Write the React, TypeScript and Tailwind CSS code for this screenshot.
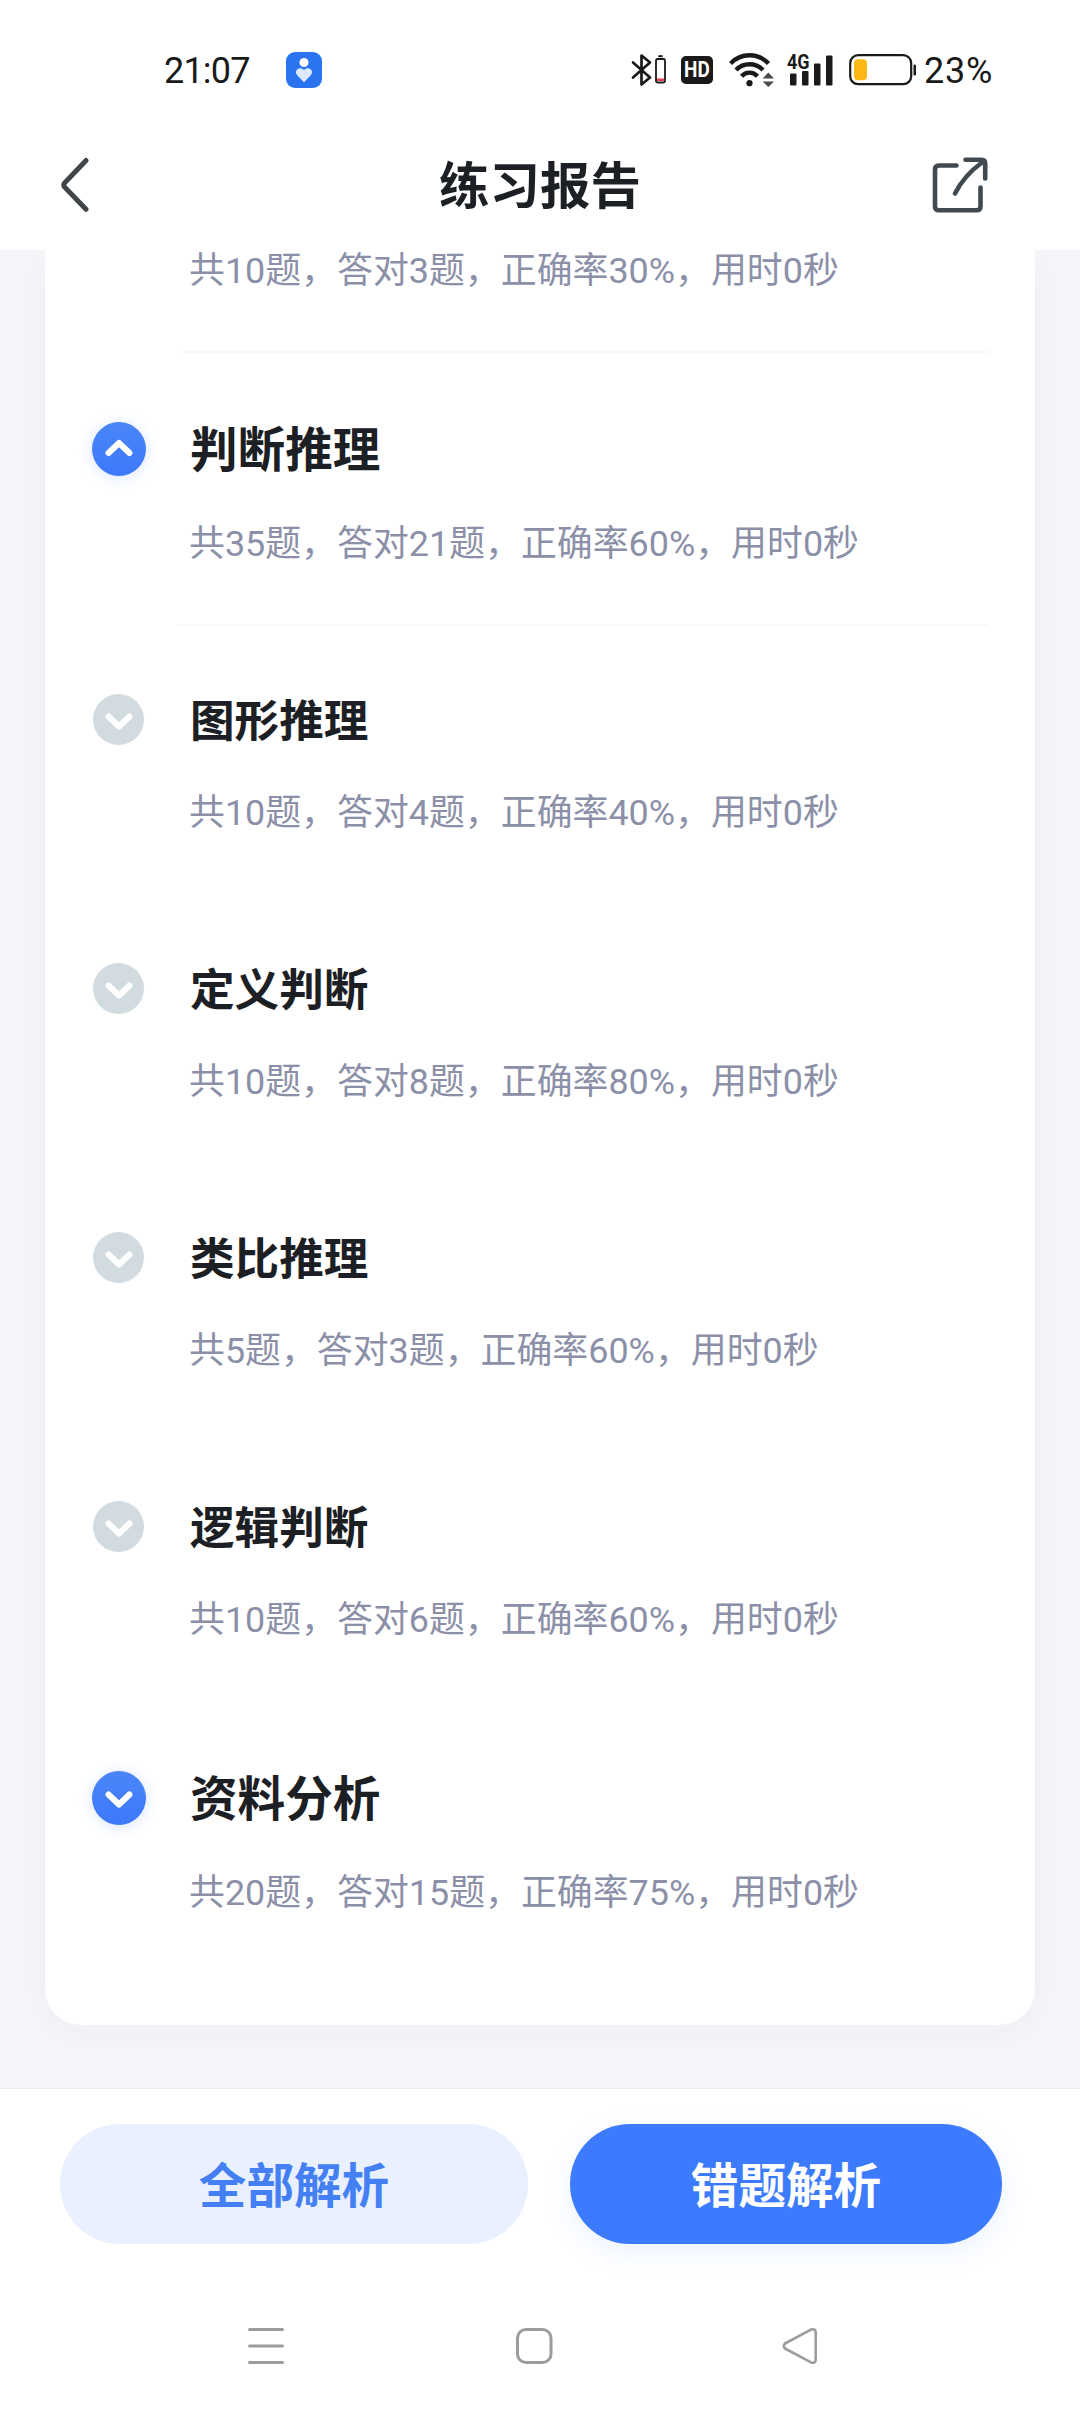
import { clsx } from 'clsx';

interface ReportItem {
  name: string;
  total: number;
  right: number;
  rate: number;
  level: 'group' | 'child';
  expanded?: boolean;
  divider?: boolean;
}

const items: ReportItem[] = [
  { name: '判断推理', total: 35, right: 21, rate: 60, level: 'group', expanded: true, divider: true },
  { name: '图形推理', total: 10, right: 4, rate: 40, level: 'child' },
  { name: '定义判断', total: 10, right: 8, rate: 80, level: 'child' },
  { name: '类比推理', total: 5, right: 3, rate: 60, level: 'child' },
  { name: '逻辑判断', total: 10, right: 6, rate: 60, level: 'child' },
  { name: '资料分析', total: 20, right: 15, rate: 75, level: 'group' },
];

function summary(total: number, right: number, rate: number) {
  return `共${total}题，答对${right}题，正确率${rate}%，用时0秒`;
}

function StatusBar() {
  return (
    <div className="flex h-[120px] items-center pt-[20px] pl-[164px] text-[36px] leading-none text-[#1a1a1a]">
      <span className="w-[122px] pt-[2px] tracking-[-0.8px]">21:07</span>
      <svg width="36" height="36" viewBox="0 0 36 36">
        <rect width="36" height="36" rx="9" fill="#2b74f0" />
        <circle cx="18" cy="10.5" r="4.5" fill="#fff" />
        <path d="M18 30.2 L11.2 23.2 C7.6 19 12.8 13.2 18 18 C23.2 13.2 28.4 19 24.8 23.2 Z" fill="#dfe9fd" />
      </svg>
      <div className="ml-[309px] flex items-center">
        {/* bluetooth with headset battery */}
        <svg width="36" height="36" viewBox="0 0 36 36" fill="none">
          <path d="M2 10.5 L19 25.5 L10.5 32.5 V3.5 L19 10.5 L2 25.5" stroke="#1a1a1a" strokeWidth="2.7" strokeLinejoin="round" strokeLinecap="round" />
          <rect x="25" y="7" width="9" height="23.5" rx="1.5" stroke="#1a1a1a" strokeWidth="1.8" />
          <path d="M27.3 4.2 H31.7" stroke="#1a1a1a" strokeWidth="2" />
          <rect x="26" y="26.5" width="7" height="2.5" fill="#e0424e" />
        </svg>
        <span className="ml-[14px] flex h-7 w-8 items-center justify-center rounded-[5px] bg-[#1a1a1a] text-[22px] font-bold text-white">
          <span className="scale-x-[0.86]">HD</span>
        </span>
        <svg className="ml-4" width="46" height="36" viewBox="0 0 46 36" fill="none">
          <path d="M1.5 11.5 C12 0.5 29 0.5 39.5 11.5" stroke="#1a1a1a" strokeWidth="4.4" />
          <path d="M7 18 C14.5 10.3 26.5 10.3 34 18" stroke="#1a1a1a" strokeWidth="4.4" />
          <path d="M12.5 24.2 C17 19.4 24 19.4 28.5 24.2" stroke="#1a1a1a" strokeWidth="4.4" />
          <circle cx="20.5" cy="31.2" r="3.1" fill="#1a1a1a" />
          <path d="M39.3 20.5 L45 26.5 H33.6 Z M39.3 35 L45 29.5 H33.6 Z" fill="#4a4a4a" />
        </svg>
        <div className="relative ml-3 h-[34px] w-[47px]">
          <span className="absolute -top-px left-0 origin-left scale-x-[0.9] text-[20px] leading-none font-bold">4G</span>
          <svg width="47" height="34" viewBox="0 0 47 34" fill="#1a1a1a">
            <rect x="3" y="20.5" width="6.5" height="12" rx="1" />
            <rect x="15" y="18" width="6.5" height="14.5" rx="1" />
            <rect x="27" y="10.5" width="6.5" height="22" rx="1" />
            <rect x="39" y="2.5" width="6.5" height="30" rx="1" />
          </svg>
        </div>
        <svg className="ml-[15px]" width="68" height="32" viewBox="0 0 68 32" fill="none">
          <rect x="1.2" y="1.2" width="61" height="29" rx="8" stroke="#1a1a1a" strokeWidth="2.2" />
          <rect x="5" y="5.3" width="13" height="21" rx="4" fill="#fdb813" />
          <rect x="64.5" y="10.5" width="2.5" height="11" rx="1.2" fill="#1a1a1a" />
        </svg>
        <span className="ml-[7px] pt-[2px] tracking-[0.8px]">23%</span>
      </div>
    </div>
  );
}

function Header() {
  return (
    <header className="flex h-[130px] items-center pl-[60px]">
      <svg width="56" height="56" viewBox="0 0 56 56" fill="none">
        <path d="M26 3.5 L4.5 26 Q3 28 4.5 30 L26 52.3" stroke="#404648" strokeWidth="5" strokeLinecap="round" />
      </svg>
      <h1 className="ml-[323px] w-[493px] pt-[5px] text-[50.5px] leading-none font-bold text-[#1c2024]">练习报告</h1>
      <svg width="57" height="56" viewBox="0 0 57 56" fill="none" stroke="#404a50" strokeWidth="4.6" strokeLinecap="round">
        <path d="M24.5 8.5 H7 Q3 8.5 3 12.5 V49.5 Q3 53.3 7 53.3 H44.5 Q48.5 53.3 48.5 49.5 V30.5" />
        <path d="M33.5 2.7 H49.5 Q53.2 2.7 53.2 6.5 V21.5" />
        <path d="M50 5.5 Q32 18.5 23 36.5" />
      </svg>
    </header>
  );
}

function ToggleIcon({ level, expanded }: { level: ReportItem['level']; expanded?: boolean }) {
  return (
    <span
      className={clsx(
        'mb-px flex items-center justify-center rounded-full',
        level === 'group'
          ? 'size-[54px] bg-linear-to-b from-[#4a86f8] to-[#3d78fb] shadow-[0_2px_14px_rgba(62,123,254,0.2)]'
          : 'size-[51px] bg-[#d2dbe0]'
      )}
    >
      <svg width="30" height="20" viewBox="0 0 30 20" fill="none">
        <path
          d={expanded ? 'M4.5 14 L15 4 L25.5 14' : 'M4.5 6.5 L15 16.5 L25.5 6.5'}
          stroke="#fff"
          strokeWidth="6"
          strokeLinecap="round"
          strokeLinejoin="round"
        />
      </svg>
    </span>
  );
}

function ReportRow({ item }: { item: ReportItem }) {
  const isGroup = item.level === 'group';

  return (
    <div className={clsx('flex', isGroup ? 'h-[271px] pt-[72px]' : 'h-[269px] pt-[70px]')}>
      <div className="flex h-12 w-[147px] items-center justify-center">
        <ToggleIcon level={item.level} expanded={item.expanded} />
      </div>
      <div className="-ml-[3px] pt-[2px]">
        <h2
          className={clsx(
            'pl-px leading-[48px] font-bold text-[#1c2024]',
            isGroup ? 'text-[47.6px]' : 'text-[44.6px]'
          )}
        >
          {item.name}
        </h2>
        <p className={clsx('text-[35.9px] leading-[54px] text-[#8b8fa8]', isGroup ? 'mt-[42px]' : 'mt-10')}>
          {summary(item.total, item.right, item.rate)}
        </p>
      </div>
    </div>
  );
}

export default function App() {
  return (
    <div className="flex h-[2412px] w-[1080px] flex-col overflow-hidden bg-white font-['Roboto','Noto_Sans_CJK_SC',sans-serif]">
      <StatusBar />
      <Header />

      <main className="h-[1838px] overflow-hidden bg-[#f4f6fa] px-[45px]">
        <div className="h-[1775px] rounded-b-[36px] bg-white shadow-[0_6px_36px_rgba(40,50,60,0.04)]">
          <p className="h-[101px] pl-[144px] text-[35.9px] leading-[42px] text-[#8b8fa8]">{summary(10, 3, 30)}</p>
          <div className="mr-[46px] ml-[135px] h-[2px] bg-[#f7f7f8]" />
          {items.map((item) => (
            <div key={item.name}>
              <ReportRow item={item} />
              {item.divider && <div className="mr-[47px] ml-[131px] h-[2px] bg-[#f9f9fa]" />}
            </div>
          ))}
        </div>
      </main>

      <footer className="flex h-[156px] border-t border-[#e9eaed] pt-[35px] pl-[60px]">
        <button className="h-[120px] w-[468px] rounded-full bg-[#e9f0ff] pt-[8px] text-[47.6px] font-bold text-[#447ff4]">全部解析</button>
        <button className="ml-[42px] h-[120px] w-[432px] rounded-full bg-[#3d7bfe] pt-[8px] text-[47.6px] font-bold text-white shadow-[0_8px_28px_rgba(61,123,254,0.1)]">
          错题解析
        </button>
      </footer>

      {/* system navigation */}
      <nav className="flex items-center pt-[82px] pl-[247px] text-[#9c9c9c]">
        <svg width="38" height="40" viewBox="0 0 38 40" stroke="currentColor" strokeWidth="3" strokeLinecap="round">
          <path d="M2.5 3.5 H35.5 M2.5 20 H35.5 M2.5 36.5 H35.5" />
        </svg>
        <svg className="ml-[230px]" width="38" height="40" viewBox="0 0 38 40" fill="none" stroke="currentColor" strokeWidth="3">
          <rect x="2.5" y="3.5" width="33.5" height="33" rx="8.5" />
        </svg>
        <svg className="ml-[229px]" width="38" height="40" viewBox="0 0 38 40" fill="none" stroke="currentColor" strokeWidth="2.6" strokeLinejoin="round">
          <path d="M3 17.5 L29 3.6 Q33.7 2 33.7 6.5 V33.5 Q33.7 38 29 36.4 L3 22.5 Q0.6 20 3 17.5 Z" />
        </svg>
      </nav>
    </div>
  );
}
